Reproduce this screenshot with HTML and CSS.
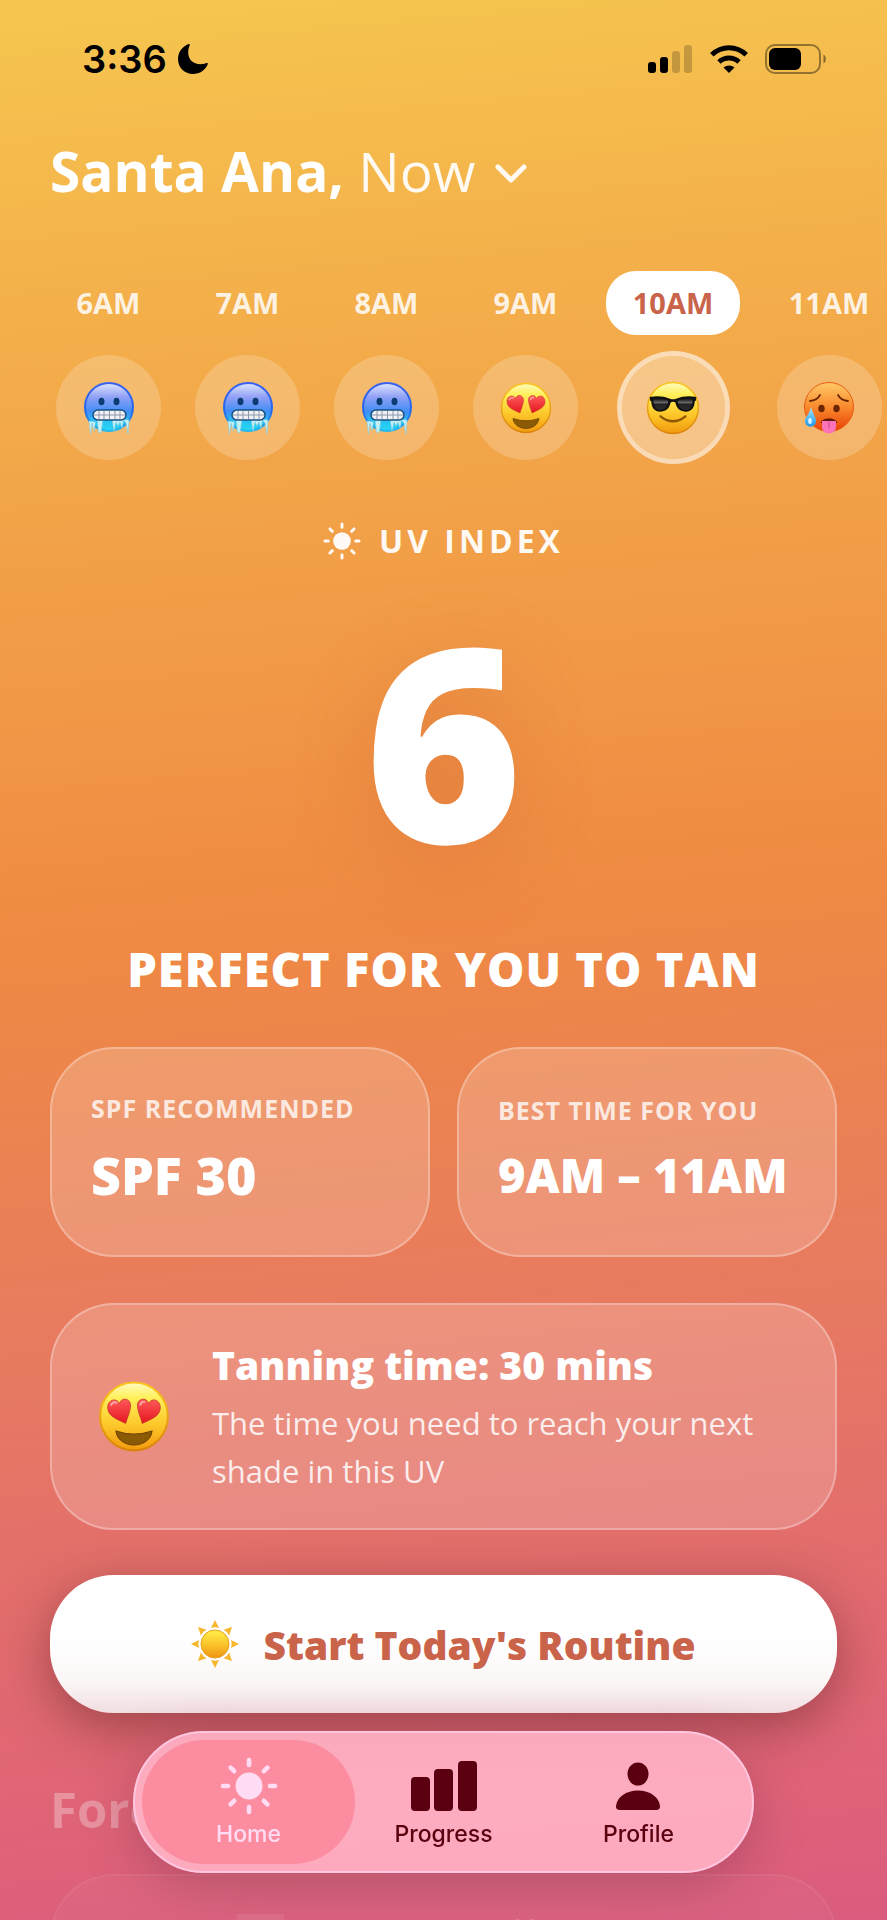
FILE: index.html
```html
<!DOCTYPE html>
<html lang="en">
<head>
    <meta charset="UTF-8">
    <meta name="viewport" content="width=device-width, initial-scale=1.0">
    <title>UV Index</title>
    <link rel="stylesheet" href="styles.css">
</head>
<body>
    <!-- Shared emoji and icon shapes -->
    <svg class="sprite" width="0" height="0" aria-hidden="true">
        <defs>
            <linearGradient id="cold-fill" x1="0" y1="0" x2="0" y2="1">
                <stop offset="0" stop-color="#dfe6ff"/>
                <stop offset="0.3" stop-color="#8f9ff5"/>
                <stop offset="0.6" stop-color="#3f8df5"/>
                <stop offset="0.8" stop-color="#27c3f3"/>
                <stop offset="1" stop-color="#27d8f3"/>
            </linearGradient>
            <linearGradient id="cold-rim" x1="0" y1="0" x2="0" y2="1">
                <stop offset="0" stop-color="#3b63f0"/>
                <stop offset="0.6" stop-color="#2467ec"/>
                <stop offset="1" stop-color="#25b8ee"/>
            </linearGradient>
            <linearGradient id="yellow-fill" x1="0" y1="0" x2="0" y2="1">
                <stop offset="0" stop-color="#fffbc0"/>
                <stop offset="0.22" stop-color="#fff05c"/>
                <stop offset="0.6" stop-color="#fdca2c"/>
                <stop offset="1" stop-color="#f29a0e"/>
            </linearGradient>
            <linearGradient id="yellow-rim" x1="0" y1="0" x2="0" y2="1">
                <stop offset="0" stop-color="#fbc51c"/>
                <stop offset="1" stop-color="#d9820a"/>
            </linearGradient>
            <linearGradient id="sun-fill" x1="0" y1="0" x2="0" y2="1">
                <stop offset="0" stop-color="#fff04a"/>
                <stop offset="0.5" stop-color="#fbc52c"/>
                <stop offset="1" stop-color="#ee9412"/>
            </linearGradient>
            <linearGradient id="hot-fill" x1="0" y1="0" x2="0" y2="1">
                <stop offset="0" stop-color="#ffc966"/>
                <stop offset="0.5" stop-color="#f98a2d"/>
                <stop offset="1" stop-color="#e83f05"/>
            </linearGradient>
            <linearGradient id="drop-fill" x1="0" y1="0" x2="0" y2="1">
                <stop offset="0" stop-color="#a9e6fb"/>
                <stop offset="1" stop-color="#1d97e8"/>
            </linearGradient>
            <linearGradient id="heart-fill" x1="0" y1="0" x2="0" y2="1">
                <stop offset="0" stop-color="#ff5a5a"/>
                <stop offset="1" stop-color="#e3161f"/>
            </linearGradient>
            <linearGradient id="lens-fill" x1="0" y1="0" x2="0" y2="1">
                <stop offset="0" stop-color="#111"/>
                <stop offset="0.35" stop-color="#666"/>
                <stop offset="0.5" stop-color="#222"/>
                <stop offset="1" stop-color="#2c2c2c"/>
            </linearGradient>
        </defs>

        <symbol id="face-cold" viewBox="0 0 52 54">
            <circle cx="26" cy="26" r="24" fill="url(#cold-fill)" stroke="url(#cold-rim)" stroke-width="2"/>
            <ellipse cx="18.500" cy="20.500" rx="3" ry="3.800" fill="#0b3d73"/>
            <ellipse cx="33.500" cy="20.500" rx="3" ry="3.800" fill="#0b3d73"/>
            <path d="M6 40 L7.500 53 L9 42 L11 50 L12.500 41 Z M14 38 L15.500 51 L18 52 L20 38 Z M29 38 L31 50 L33 41 L35 45 L37 41 L39 47 L40.500 39 L43 42 L45 53 L46 39 Z" fill="#c4f1f8" stroke="#86cfe0" stroke-width="0.600"/>
            <rect x="10" y="29" width="33" height="10" rx="5" fill="#f1f0f4" stroke="#174f80" stroke-width="1.500"/>
            <path d="M11 34 H42 M16 30 V38 M21 30 V38 M26.500 30 V38 M32 30 V38 M37 30 V38" stroke="#8b98ad" stroke-width="1" fill="none"/>
        </symbol>

        <symbol id="face-love" viewBox="0 0 52 54">
            <circle cx="26" cy="27" r="24.500" fill="url(#yellow-fill)" stroke="url(#yellow-rim)" stroke-width="1.500"/>
            <path d="M20 32 C14 29 7 27 7 20.500 C7 15 13 13 15.500 17.500 C17 12.500 24 14 23.500 19.500 C23.200 24 21 28 20 32 Z" fill="url(#heart-fill)" stroke="#c9382b" stroke-width="0.600"/>
            <path d="M32 32 C38 29 45 27 45 20.500 C45 15 39 13 36.500 17.500 C35 12.500 28 14 28.500 19.500 C28.800 24 31 28 32 32 Z" fill="url(#heart-fill)" stroke="#c9382b" stroke-width="0.600"/>
            <path d="M9.500 18.500 Q11 16 13.500 17 M30.500 18.500 Q31.500 15.800 33.500 16.500" stroke="#ff9c9c" stroke-width="1.600" fill="none" stroke-linecap="round"/>
            <path d="M13 37.500 Q26 42 39 37.500 C38.500 43.500 32.500 47.500 26 47.500 C19.500 47.500 13.500 43.500 13 37.500 Z" fill="#8a5a05" stroke="#704300" stroke-width="0.800"/>
        </symbol>

        <symbol id="face-cool" viewBox="0 0 52 54">
            <circle cx="26" cy="27" r="24.500" fill="url(#yellow-fill)" stroke="url(#yellow-rim)" stroke-width="1.500"/>
            <path d="M3.500 16.500 Q14 14.500 23 18 Q26 19 29 18 Q38 14.500 48.500 16.500 L48 20 L47 20.500 C46.500 27 44 30.500 38 30.500 C32 30.500 29.500 27 28.300 21.800 Q26 20 23.700 21.800 C22.500 27 20 30.500 14 30.500 C8 30.500 5.500 27 5 20.500 L4 20 Z" fill="#111"/>
            <path d="M7 18.500 Q15 17 21.500 20 C20.500 26 18 28.800 14 28.800 C9 28.800 7.300 25 7 18.500 Z M45 18.500 Q37 17 30.500 20 C31.500 26 34 28.800 38 28.800 C43 28.800 44.700 25 45 18.500 Z" fill="url(#lens-fill)"/>
            <path d="M14 35 Q26 44.500 38 35" fill="none" stroke="#8d5706" stroke-width="2.200" stroke-linecap="round"/>
        </symbol>

        <symbol id="face-hot" viewBox="0 0 52 54">
            <circle cx="26" cy="26" r="24.500" fill="url(#hot-fill)" stroke="#e85c12" stroke-width="1"/>
            <path d="M7 20 Q14 19.500 17 14 M45 20 Q38 19.500 35 14" fill="none" stroke="#6b2503" stroke-width="1.800" stroke-linecap="round"/>
            <ellipse cx="18.500" cy="27.500" rx="3.200" ry="3.800" fill="#6b2503"/>
            <ellipse cx="33.500" cy="27.500" rx="3.200" ry="3.800" fill="#6b2503"/>
            <path d="M18 42 C18 36 34 36 34 42 Z" fill="#5e1a05"/>
            <path d="M19 40 H33 V46 C33 54.500 19 54.500 19 46 Z" fill="#fb74bb"/>
            <path d="M26 41 V47" stroke="#d94a95" stroke-width="1.200" stroke-linecap="round"/>
            <path d="M8 26 C10 33 13 36 13 40 C13 47.500 2 47.500 2 40 C2 36 6.500 33 8 26 Z" fill="url(#drop-fill)"/>
            <ellipse cx="7" cy="40" rx="1.800" ry="3" fill="#d8f6ff"/>
        </symbol>

        <symbol id="icon-sun" viewBox="0 0 58 58">
            <circle cx="29" cy="29" r="13.500" fill="currentColor"/>
            <g stroke="currentColor" stroke-width="4.600" stroke-linecap="round">
                <path d="M29 3 V8 M29 50 V55 M3 29 H8 M50 29 H55 M10.600 10.600 L14.200 14.200 M43.800 43.800 L47.400 47.400 M10.600 47.400 L14.200 43.800 M43.800 14.200 L47.400 10.600"/>
            </g>
        </symbol>
    </svg>

    <div class="app">
        <!-- Status bar -->
        <div class="status-bar">
            <div class="status-left">
                <span class="clock">3:36</span>
                <svg class="moon" viewBox="0 0 32 32" aria-hidden="true">
                    <path d="M11.500 1 C6 3 1 8.500 1 16 C1 24.500 7.500 31 16 31 C23 31 28.500 27 30.800 21 C31 20 30.300 19.800 29.500 20.100 C27.500 21 25.500 21.200 23.500 21.200 C16 21.200 11.200 16.500 11.200 9.500 C11.200 6.800 11.800 4.500 12.700 2.300 C13 1.300 12.500 .700 11.500 1 Z"/>
                </svg>
            </div>
            <div class="status-right">
                <svg class="signal" viewBox="0 0 45 30" aria-hidden="true">
                    <rect x="0" y="18" width="8" height="11" rx="3"/>
                    <rect x="12" y="13" width="8" height="16" rx="3"/>
                    <rect x="24" y="7" width="8" height="22" rx="3" opacity="0.200"/>
                    <rect x="36" y="1" width="8" height="28" rx="3" opacity="0.200"/>
                </svg>
                <svg class="wifi" viewBox="0 0 38 30" aria-hidden="true">
                    <path d="M19 29 L13.500 23.500 C16.500 20.800 21.500 20.800 24.500 23.500 Z"/>
                    <path d="M9 18 C14.800 12.800 23.200 12.800 29 18" fill="none" stroke="#000" stroke-width="5"/>
                    <path d="M1.800 10.800 C11.800 1.400 26.200 1.400 36.200 10.800" fill="none" stroke="#000" stroke-width="5"/>
                </svg>
                <svg class="battery" viewBox="0 0 62 30" aria-hidden="true">
                    <rect x="1" y="1" width="54" height="28" rx="9" fill="none" stroke="#000" stroke-width="2" opacity="0.400"/>
                    <rect x="4" y="4" width="32" height="22" rx="6"/>
                    <path d="M58.500 10.500 C61.500 12 61.500 18 58.500 19.500 Z" opacity="0.450"/>
                </svg>
            </div>
        </div>

        <header class="location">
            <h1>
                <button type="button" class="location-btn">
                    <span><strong>Santa Ana,</strong> Now</span>
                    <svg class="chevron" viewBox="0 0 32 20" aria-hidden="true">
                        <path d="M3 3 L16 16 L29 3"/>
                    </svg>
                </button>
            </h1>
        </header>

        <main>
            <!-- Hourly strip -->
            <nav class="hours" aria-label="Hours">
                <button type="button" class="hour">
                    <span class="hour-label">6AM</span>
                    <span class="hour-face"><svg><use href="#face-cold"/></svg></span>
                </button>
                <button type="button" class="hour">
                    <span class="hour-label">7AM</span>
                    <span class="hour-face"><svg><use href="#face-cold"/></svg></span>
                </button>
                <button type="button" class="hour">
                    <span class="hour-label">8AM</span>
                    <span class="hour-face"><svg><use href="#face-cold"/></svg></span>
                </button>
                <button type="button" class="hour">
                    <span class="hour-label">9AM</span>
                    <span class="hour-face"><svg><use href="#face-love"/></svg></span>
                </button>
                <button type="button" class="hour wide selected">
                    <span class="hour-label">10AM</span>
                    <span class="hour-face"><svg><use href="#face-cool"/></svg></span>
                </button>
                <button type="button" class="hour wide">
                    <span class="hour-label">11AM</span>
                    <span class="hour-face"><svg><use href="#face-hot"/></svg></span>
                </button>
            </nav>

            <!-- UV reading -->
            <section class="uv">
                <h2 class="uv-title">
                    <svg aria-hidden="true"><use href="#icon-sun"/></svg>
                    <span>UV INDEX</span>
                </h2>
                <p class="uv-value">6</p>
                <p class="uv-verdict">PERFECT FOR YOU TO TAN</p>
            </section>

            <section class="stats">
                <div class="card stat">
                    <h3>SPF RECOMMENDED</h3>
                    <p>SPF 30</p>
                </div>
                <div class="card stat">
                    <h3>BEST TIME FOR YOU</h3>
                    <p class="range">9AM – 11AM</p>
                </div>
            </section>

            <section class="card tanning">
                <svg class="tanning-face" aria-hidden="true"><use href="#face-love"/></svg>
                <div class="tanning-text">
                    <h3>Tanning time: 30 mins</h3>
                    <p>The time you need to reach your next shade in this UV</p>
                </div>
            </section>

            <button type="button" class="start-btn">
                <svg class="start-sun" viewBox="0 0 48 48" aria-hidden="true">
                    <g fill="#f8b62d">
                        <path id="ray" d="M24 0 L28 8 Q24 6.500 20 8 Z"/>
                        <use href="#ray" transform="rotate(45 24 24)"/>
                        <use href="#ray" transform="rotate(90 24 24)"/>
                        <use href="#ray" transform="rotate(135 24 24)"/>
                        <use href="#ray" transform="rotate(180 24 24)"/>
                        <use href="#ray" transform="rotate(225 24 24)"/>
                        <use href="#ray" transform="rotate(270 24 24)"/>
                        <use href="#ray" transform="rotate(315 24 24)"/>
                    </g>
                    <circle cx="24" cy="24" r="14" fill="url(#sun-fill)" stroke="#e8a01c" stroke-width="1"/>
                </svg>
                <span>Start Today's Routine</span>
            </button>

            <section class="forecast">
                <h2>Forecast</h2>
                <div class="card forecast-card">
                    <span class="forecast-chip"></span>
                    <span class="forecast-level">Very High</span>
                </div>
            </section>
        </main>

        <!-- Floating tab bar -->
        <nav class="tab-bar" aria-label="Main">
            <a href="#home" class="tab active">
                <svg class="tab-sun" aria-hidden="true"><use href="#icon-sun"/></svg>
                <span>Home</span>
            </a>
            <a href="#progress" class="tab">
                <svg viewBox="0 0 66 58" aria-hidden="true">
                    <rect x="0" y="20" width="19" height="34" rx="4"/>
                    <rect x="23" y="12" width="19" height="42" rx="4"/>
                    <rect x="47" y="4" width="19" height="50" rx="4"/>
                </svg>
                <span>Progress</span>
            </a>
            <a href="#profile" class="tab">
                <svg viewBox="0 0 66 58" aria-hidden="true">
                    <ellipse cx="33" cy="17" rx="10.500" ry="11.500"/>
                    <path d="M11 49 C12 40 21 33.500 33 33.500 C45 33.500 54 40 55 49 Q55.300 53 51 53 H15 Q10.700 53 11 49 Z"/>
                </svg>
                <span>Profile</span>
            </a>
        </nav>
    </div>
</body>
</html>
```
FILE: styles.css
```css
/* Global Styles */
* {
    margin: 0;
    padding: 0;
    box-sizing: border-box;
}

body {
    font-family: 'Open Sans', sans-serif;
    color: #fff;
}

button {
    font: inherit;
    color: inherit;
    background: none;
    border: none;
    cursor: pointer;
}

.sprite {
    position: absolute;
}

.app {
    height: 100vh;
    overflow: hidden;
    padding: 0 50px;
    background: linear-gradient(175deg, #f6c64f 0%, #f4b24b 14%, #f2a248 27%, #ef8943 48%, #e87b5f 67%, #e36e6c 80%, #df6378 92%, #da5c7e 100%);
}

/* Status Bar */
.status-bar {
    display: flex;
    justify-content: space-between;
    align-items: center;
    height: 118px;
    padding: 0 10px 0 32px;
    color: #000;
}

.status-left,
.status-right {
    display: flex;
    align-items: center;
}

.status-left {
    gap: 10px;
}

.status-right {
    gap: 17px;
}

.clock {
    font-family: 'Inter', sans-serif;
    font-size: 38px;
    font-weight: 600;
}

.moon {
    width: 32px;
    height: 32px;
}

.signal {
    width: 45px;
    height: 30px;
}

.wifi {
    width: 38px;
    height: 30px;
}

.battery {
    width: 62px;
    height: 30px;
}

/* Location */
.location h1 {
    margin-top: 15px;
    font-size: 55px;
    font-weight: 500;
    line-height: 76px;
}

.location-btn {
    display: flex;
    align-items: center;
    gap: 20px;
    color: rgba(255, 255, 255, 0.92);
}

.location-btn strong {
    font-weight: 700;
    color: #fff;
}

.chevron {
    width: 32px;
    height: 20px;
    margin-top: 6px;
    fill: none;
    stroke: currentColor;
    stroke-width: 5;
    stroke-linecap: round;
    stroke-linejoin: round;
}

/* Hourly Strip */
.hours {
    display: flex;
    gap: 22px;
    margin: 62px -50px 0 0;
    overflow: hidden;
}

.hour {
    display: flex;
    flex: 0 0 117px;
    flex-direction: column;
    align-items: center;
    gap: 16px;
}

.hour.wide {
    flex-basis: 134px;
}

.hour-label {
    width: 100%;
    border-radius: 30px;
    font-size: 29px;
    font-weight: 700;
    line-height: 64px;
    color: rgba(255, 255, 255, 0.85);
}

.hour-face {
    display: flex;
    align-items: center;
    justify-content: center;
    width: 105px;
    height: 105px;
    margin: 4px 0;
    border-radius: 50%;
    background-color: rgba(255, 255, 255, 0.2);
}

.hour-face svg {
    width: 52px;
    height: 54px;
}

.hour.selected .hour-label {
    background-color: #fff;
    color: #c9634a;
}

.hour.selected .hour-face {
    width: 113px;
    height: 113px;
    margin: 0;
    border: 5px solid rgba(255, 255, 255, 0.6);
    background-color: rgba(255, 255, 255, 0.35);
    background-clip: padding-box;
}

.hour.selected .hour-face svg {
    width: 56px;
    height: 56px;
}

/* UV Reading */
.uv {
    text-align: center;
}

.uv-title {
    display: flex;
    align-items: center;
    justify-content: center;
    gap: 18px;
    margin-top: 55px;
    font-size: 32px;
    line-height: 44px;
    letter-spacing: 4px;
    color: rgba(255, 255, 255, 0.95);
}

.uv-title svg {
    width: 38px;
    height: 38px;
}

.uv-value {
    margin-top: 40px;
    font-size: 270px;
    font-weight: 800;
    line-height: 270px;
    text-shadow: 0 20px 80px rgba(200, 90, 50, 0.3);
}

.uv-verdict {
    margin-top: 65px;
    font-size: 47px;
    font-weight: 800;
    line-height: 62px;
    letter-spacing: 1px;
    white-space: nowrap;
}

/* Cards */
.card {
    border: 2px solid rgba(255, 255, 255, 0.28);
    border-radius: 64px;
    background-color: rgba(255, 255, 255, 0.18);
}

.stats {
    display: grid;
    grid-template-columns: 1fr 1fr;
    gap: 27px;
    margin-top: 47px;
}

.stat {
    display: flex;
    flex-direction: column;
    justify-content: center;
    gap: 18px;
    height: 210px;
    padding: 0 0 4px 39px;
    white-space: nowrap;
}

.stat h3 {
    font-size: 25px;
    font-weight: 700;
    line-height: 32px;
    letter-spacing: 1px;
    color: rgba(255, 255, 255, 0.8);
}

.stat p {
    font-size: 52px;
    font-weight: 800;
    line-height: 66px;
}

.stat .range {
    font-size: 47px;
    line-height: 62px;
}

.tanning {
    display: flex;
    align-items: center;
    gap: 42px;
    min-height: 227px;
    margin-top: 46px;
    padding: 32px 38px 32px 46px;
}

.tanning-face {
    flex: none;
    width: 72px;
    height: 75px;
}

.tanning h3 {
    font-size: 39px;
    font-weight: 800;
    line-height: 54px;
}

.tanning p {
    margin-top: 7px;
    font-size: 31px;
    line-height: 48px;
    color: rgba(255, 255, 255, 0.85);
}

.start-btn {
    display: flex;
    align-items: center;
    justify-content: center;
    gap: 24px;
    width: 100%;
    height: 138px;
    margin-top: 45px;
    border-radius: 64px;
    background: linear-gradient(#fff 45%, #fbf6f6 78%, #f1dde0);
    box-shadow: 0 14px 50px rgba(90, 35, 35, 0.5);
    font-size: 39px;
    font-weight: 800;
    color: #c9634a;
}

.start-sun {
    width: 48px;
    height: 48px;
}

/* Forecast */
.forecast {
    margin-top: 62px;
}

.forecast h2 {
    font-size: 49px;
    font-weight: 700;
    line-height: 68px;
    opacity: 0.3;
}

.forecast-card {
    display: flex;
    align-items: flex-start;
    gap: 232px;
    height: 210px;
    margin-top: 31px;
    padding: 38px 185px;
    opacity: 0.2;
}

.forecast-chip {
    width: 47px;
    height: 60px;
    background-color: rgba(255, 255, 255, 0.4);
}

.forecast-level {
    font-size: 30px;
    line-height: 30px;
}

/* Tab Bar */
.tab-bar {
    position: fixed;
    bottom: 47px;
    left: 15%;
    right: 15%;
    display: grid;
    grid-template-columns: repeat(3, 1fr);
    height: 142px;
    padding: 7px 16px;
    border: 2px solid #ffc6e0;
    border-radius: 71px;
    background-color: rgba(255, 177, 196, 0.92);
    backdrop-filter: blur(5px);
    box-shadow: 0 14px 50px rgba(110, 50, 70, 0.35);
}

.tab {
    position: relative;
    display: flex;
    flex-direction: column;
    align-items: center;
    padding-top: 17px;
    font-family: 'Inter', sans-serif;
    font-size: 23px;
    font-weight: 500;
    line-height: 30px;
    color: #5a0010;
    text-decoration: none;
}

.tab svg {
    width: 66px;
    height: 58px;
    margin-bottom: 4px;
    fill: currentColor;
}

.tab.active {
    color: #ffdcf3;
}

.tab.active::before {
    content: '';
    position: absolute;
    inset: 0 -9px;
    z-index: -1;
    border-radius: 62px;
    background-color: rgba(252, 138, 156, 0.9);
}
```
